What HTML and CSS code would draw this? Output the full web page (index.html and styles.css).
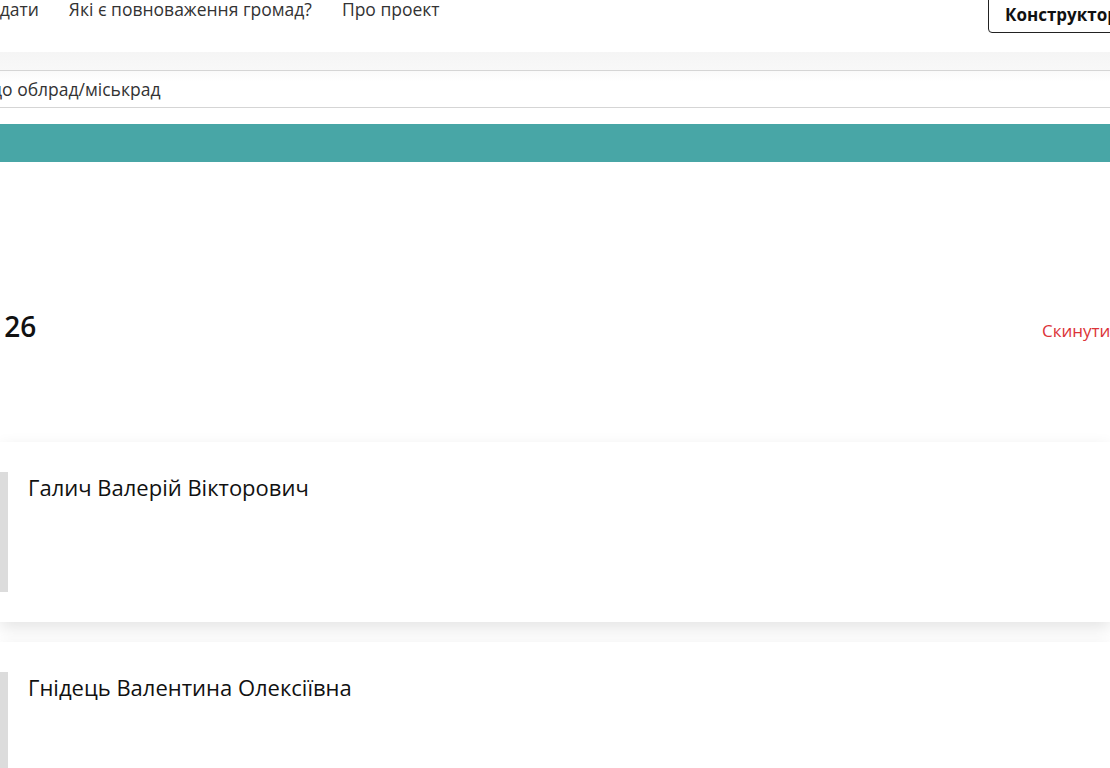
FILE: index.html
```html
<!DOCTYPE html>
<html lang="uk">

<head>
    <meta charset="UTF-8">
    <meta name="viewport" content="width=device-width, initial-scale=1.0">
    <title>Кандидати</title>
    <link rel="stylesheet" href="styles.css">
</head>

<body>
    <div class="header">
        <nav class="nav">
            <a href="#" class="nav_link first">Кандидати</a>
            <a href="#" class="nav_link">Які є повноваження громад?</a>
            <a href="#" class="nav_link">Про проект</a>
        </nav>
        <button type="button" class="builder">Конструктор</button>
    </div>
    <div class="header_shadow"></div>

    <div class="search">
        <input type="text" class="search_input" value="до облрад/міськрад">
    </div>
    <div class="search_bar"></div>

    <div class="summary">
        <h2 class="count">Знайдено: 26</h2>
        <a href="#" class="reset">Скинути</a>
    </div>

    <div class="list">
        <div class="card">
            <div class="photo"></div>
            <h3 class="name">Галич Валерій Вікторович</h3>
        </div>
        <div class="card">
            <div class="photo"></div>
            <h3 class="name">Гнідець Валентина Олексіївна</h3>
        </div>
    </div>
</body>

</html>
```

FILE: styles.css
```css
*,
::before,
::after {
    box-sizing: border-box;
    font-family: "Open Sans", "Noto Sans", sans-serif;
}

body {
    margin: unset;
    width: 1110px;
    height: 768px;
    overflow: hidden;
    background-color: white;
    color: #222;
}

.header {
    display: flex;
    justify-content: space-between;
    align-items: flex-start;
    height: 52px;
}

.nav {
    display: flex;
    flex: 1;
    margin-top: -3px;
}

.nav_link {
    color: #333;
    font-size: 17.5px;
    line-height: 24px;
    text-decoration: none;
    margin-right: 30px;
    white-space: nowrap;
}

.nav_link.first {
    margin-left: -53px;
}

.builder {
    flex: none;
    width: 170px;
    margin-top: -10px;
    margin-right: -48px;
    height: 43px;
    padding: 7px 16px 0 16px;
    background: white;
    border: 1px solid #222;
    border-radius: 4px;
    font-size: 17px;
    font-weight: 700;
    color: #111;
    text-align: left;
    line-height: 24px;
    white-space: nowrap;
}

.header_shadow {
    height: 18px;
    background: linear-gradient(#f5f5f5, #f8f8f8);
}

.search {
    height: 38px;
    border-top: 1px solid #d5d5d5;
    border-bottom: 1px solid #d5d5d5;
    overflow: hidden;
    background: linear-gradient(#fafafa, white 30%);
}

.search_input {
    height: 36px;
    border: none;
    background: transparent;
    outline: none;
    font-size: 17.5px;
    color: #333;
    padding: 0;
    margin-left: -8px;
    width: calc(100% + 8px);
}

.search_bar {
    margin-top: 16px;
    height: 38px;
    background-color: #48a6a6;
}

.summary {
    display: flex;
    justify-content: space-between;
    align-items: center;
    margin-top: 146px;
    height: 36px;
}

.count {
    margin: 0 0 0 -150px;
    font-size: 28px;
    font-weight: 600;
    color: #111;
    white-space: nowrap;
}

.reset {
    flex: none;
    width: 80px;
    color: #dc3338;
    font-size: 17px;
    text-decoration: none;
    margin-right: -12px;
    margin-top: 8px;
    white-space: nowrap;
}

.list {
    margin-top: 98px;
}

.card {
    display: flex;
    align-items: flex-start;
    gap: 20px;
    height: 180px;
    padding-top: 30px;
    margin-bottom: 20px;
    background-color: white;
    box-shadow: 0 6px 16px rgba(0, 0, 0, 0.11);
}

.photo {
    width: 8px;
    height: 120px;
    background-color: #dcdcdc;
}

.name {
    margin: 0;
    font-size: 22px;
    font-weight: 500;
    line-height: 30px;
    color: #111;
}
```
